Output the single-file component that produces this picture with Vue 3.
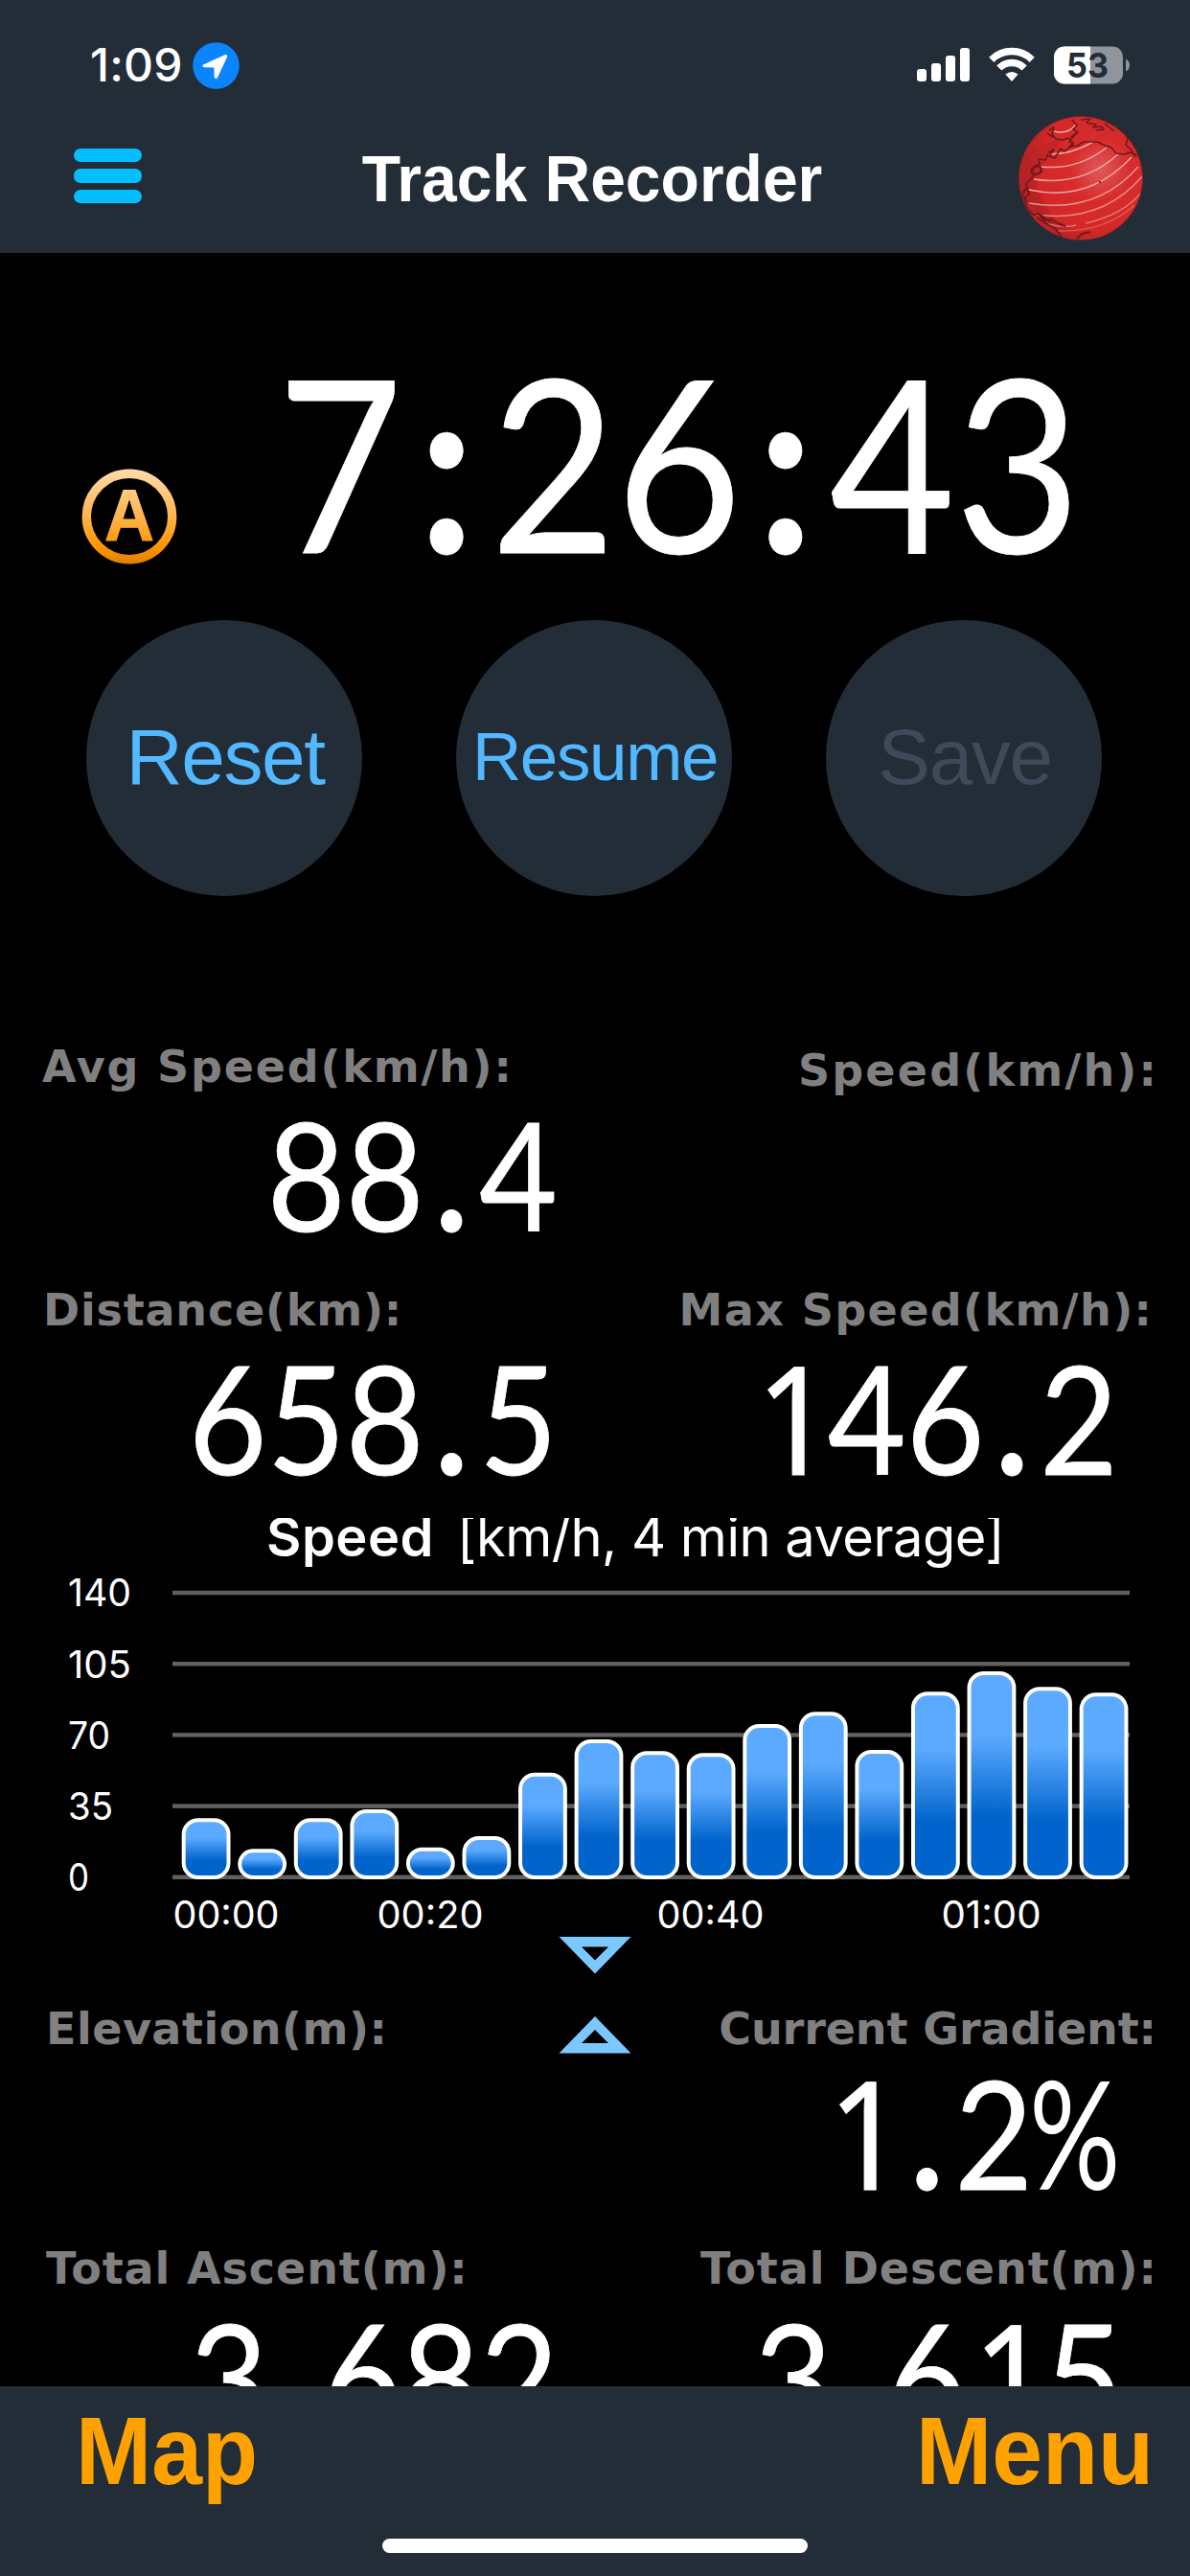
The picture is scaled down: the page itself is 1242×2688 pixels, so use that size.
<script setup>
const bars = [63.7, 31.7, 63.7, 73, 33.3, 45, 111.3, 146, 133.7, 131.7, 162, 174.7, 135, 195.7, 217, 200.7, 194.7]
const yTicks = [140, 105, 70, 35, 0]
const yTickWidth = { 140: 66, 105: 66, 70: 44, 35: 47, 0: 22 }
const xTicks = [
  { label: '00:00', x: 182, w: 108 },
  { label: '00:20', x: 395, w: 108 },
  { label: '00:40', x: 687, w: 109 },
  { label: '01:00', x: 984, w: 101 },
]
const rows = [
  {
    id: 'avg',
    left: { label: 'Avg Speed(km/h):', value: '88.4', track: 1.8 },
    right: { label: 'Speed(km/h):', value: '', track: 2.2 },
  },
  {
    id: 'dist',
    left: { label: 'Distance(km):', value: '658.5', track: 0.8 },
    right: { label: 'Max Speed(km/h):', value: '146.2', track: 1.4 },
  },
]
const lowerRows = [
  {
    id: 'elev',
    left: { label: 'Elevation(m):', value: '', track: 0.5 },
    right: { label: 'Current Gradient:', value: '1.2%', track: -0.1 },
  },
  {
    id: 'total',
    left: { label: 'Total Ascent(m):', value: '3,682', track: 0.9 },
    right: { label: 'Total Descent(m):', value: '3,615', track: 1 },
  },
]
const kind = (c) => (c === '1' ? 'one' : c === '%' ? 'pct' : /\d/.test(c) ? 'digit' : 'punct')
const tracking = (t) => ({ letterSpacing: `${t}px`, marginRight: `${-t}px` })
</script>

<template>
  <div class="screen">
    <header class="top">
      <div class="status">
        <span class="clock">1:09</span>
        <svg class="loc" width="49" height="49" viewBox="0 0 49 49">
          <circle cx="24.5" cy="24.5" r="24.3" fill="#0a84ff" />
          <path d="M11.6 23.2 L33.6 13.3 Q36.8 12.4 36 15.8 L26 37 Q24 39.6 22.6 36.6 L22.4 26.6 L12.2 26.2 Q8.8 25.2 11.6 23.2Z" fill="#fff" />
        </svg>
        <span class="spacer"></span>
        <svg class="signal" width="56" height="36" viewBox="0 0 56 36" fill="#fff">
          <rect x="0" y="22" width="10" height="13" rx="3" />
          <rect x="15" y="16" width="10" height="19" rx="3" />
          <rect x="30" y="8" width="10" height="27" rx="3" />
          <rect x="45" y="0" width="10" height="35" rx="3" />
        </svg>
        <svg class="wifi" width="48" height="37" viewBox="0 0 48 37" fill="none" stroke="#fff" stroke-width="7.4">
          <path d="M2.8 13.3 A30 30 0 0 1 45.2 13.3" />
          <path d="M10.8 22 A18.6 18.6 0 0 1 37.2 22" />
          <path d="M24 36 L17.4 28.6 Q24 23.2 30.6 28.6Z" fill="#fff" stroke="none" />
        </svg>
        <svg class="battery" width="80" height="40" viewBox="0 0 80 40">
          <defs><clipPath id="batt"><rect x="0" y="0.5" width="72" height="39" rx="11" /></clipPath></defs>
          <g clip-path="url(#batt)">
            <rect width="72" height="40" fill="#90949b" />
            <rect width="38" height="40" fill="#fff" />
          </g>
          <path d="M75 13.5 Q79 15.5 79 20 Q79 24.5 75 26.5Z" fill="#90949b" />
          <text x="13" y="33" textLength="44" lengthAdjust="spacingAndGlyphs" class="battText">53</text>
        </svg>
      </div>
      <div class="nav">
        <div class="burger"><i></i><i></i><i></i></div>
        <h1>Track Recorder</h1>
        <svg class="globe" width="132" height="132" viewBox="0 0 132 132">
          <defs>
            <radialGradient id="gl" cx="0.66" cy="0.43" r="0.6">
              <stop offset="0" stop-color="#de5a5a" />
              <stop offset="0.42" stop-color="#d62c2b" />
              <stop offset="0.85" stop-color="#d22827" />
              <stop offset="1" stop-color="#bb2424" />
            </radialGradient>
            <clipPath id="gc"><circle cx="66" cy="66" r="64" /></clipPath>
          </defs>
          <circle cx="66" cy="66" r="64.8" fill="#a41f22" />
          <circle cx="66" cy="66" r="64" fill="url(#gl)" />
          <g clip-path="url(#gc)" fill="none">
            <path d="M5 44 Q22 30 50 24 Q30 44 20 66 Q20 90 52 122 Q14 104 2 76Z" fill="#a91f22" opacity="0.35" />
            <g stroke="#f3a3a3" stroke-width="1.5">
              <path d="M38 17 Q52 21 61 10" />
              <path d="M32 41 Q57 41 79 28" />
              <path d="M25 54 Q62 58 93 34" />
              <path d="M17 67 Q68 75 106 40" />
              <path d="M12 78 Q74 92 119 44" />
              <path d="M12 92 Q82 104 126 54" opacity="0.85" />
              <path d="M20 104 Q88 113 130 64" opacity="0.75" />
              <path d="M32 114 Q50 118 61 115 M71 113 Q110 104 128 82" opacity="0.6" />
              <path d="M42 121 Q92 122 122 94" opacity="0.4" />
            </g>
            <g stroke="#74181c" stroke-width="1.6" stroke-linejoin="round">
              <path d="M57 5 L62 11 L58 15 L63 18 L56 23 L61 20 L54 27 L58 31 L49 38 L45 35 L39 45 L33 43 L38 36 L33 39 L29 47 L22 46 L23 51 L14 56 L17 63 L9 72 L12 83 L3 90 L9 93 L10 101" />
              <path d="M33 16 L38 13 L36 20 L40 25 L48 26 L53 24 L58 29 L54 33 L63 32 L69 28 L84 28 L89 31 L98 34 L103 40 L111 41 L117 39 L127 43" />
              <path d="M66 5 L76 4 L72 8 L82 10 L79 13 L88 12 L90 15 L82 16 M112 20 L115 25 L113 31 L119 37 L123 44 M91 9 L96 13 L101 17 M31 19 L37 23" />
              <path d="M17 55 Q24 50 25 59 Q20 64 14 60Z M10 76 L4 83 L9 89 L5 96" stroke-width="2.2" />
              <path d="M8 95 L16 104 L22 103 L28 110 L35 109 L44 114 L50 116 M20 107 L31 114 L40 119 L47 129 M24 104 L35 112 M62 129 L67 124 L76 122" stroke-width="2" />
            </g>
            <path d="M85 69 l2 1 l-1 1z" stroke="#74181c" />
          </g>
        </svg>
      </div>
    </header>

    <main class="body">
      <section class="timerRow">
        <svg class="auto" width="100" height="100" viewBox="0 0 100 100">
          <defs>
            <linearGradient id="am" gradientUnits="userSpaceOnUse" x1="0" y1="0" x2="0" y2="100">
              <stop offset="0" stop-color="#ffdcae" />
              <stop offset="0.5" stop-color="#ffb44c" />
              <stop offset="0.82" stop-color="#ff9500" />
              <stop offset="1" stop-color="#dc7f00" />
            </linearGradient>
          </defs>
          <circle cx="50" cy="50" r="44.7" fill="none" stroke="url(#am)" stroke-width="9.4" />
          <text x="50" y="75.3" text-anchor="middle" textLength="52" lengthAdjust="spacingAndGlyphs" fill="url(#am)" stroke="url(#am)" stroke-width="1" class="autoA">A</text>
        </svg>
        <div class="num timer"><span v-for="(c, i) in '7:26:43'" :key="i" :class="kind(c)">{{ c }}</span></div>
      </section>

      <section class="actions">
        <button class="act">Reset</button>
        <button class="act small">Resume</button>
        <button class="act off">Save</button>
      </section>

      <section v-for="r in rows" :key="r.id" class="stats" :class="r.id">
        <div class="stat left">
          <div class="label" :style="tracking(r.left.track)">{{ r.left.label }}</div>
          <div class="num"><span v-for="(c, i) in r.left.value" :key="i" :class="kind(c)">{{ c }}</span></div>
        </div>
        <div class="stat right">
          <div class="label" :style="tracking(r.right.track)">{{ r.right.label }}</div>
          <div class="num"><span v-for="(c, i) in r.right.value" :key="i" :class="kind(c)">{{ c }}</span></div>
        </div>
      </section>

      <section class="chart">
        <h2><b>Speed</b><span>[km/h, 4 min average]</span></h2>
        <svg width="1242" height="377" viewBox="0 0 1242 377">
          <defs>
            <linearGradient id="bar" x1="0" y1="0" x2="0" y2="1">
              <stop offset="0.3" stop-color="#5caaff" />
              <stop offset="0.7" stop-color="#0064cc" />
            </linearGradient>
          </defs>
          <g v-for="(t, i) in yTicks" :key="t">
            <rect x="180" :y="15.8 + i * 74.2" width="999" height="4.4" fill="#606060" />
            <text class="tick" x="71" :y="32.3 + i * 74.2" :textLength="yTickWidth[t]" lengthAdjust="spacingAndGlyphs">{{ t }}</text>
          </g>
          <rect
            v-for="(h, i) in bars"
            :key="i"
            :x="191.7 + i * 58.56"
            :y="319 - h"
            width="46.8"
            :height="h - 4"
            :rx="Math.min(15, (h - 4) / 2)"
            fill="url(#bar)"
            stroke="#fff"
            stroke-width="4"
          />
          <text v-for="t in xTicks" :key="t.label" class="tick" :x="t.x - 1.5" y="368" :textLength="t.w + 3" lengthAdjust="spacingAndGlyphs">{{ t.label }}</text>
        </svg>
      </section>

      <div class="lower">
        <svg class="split" width="76" height="122" viewBox="0 0 76 122" fill="#7bc8ff" fill-rule="evenodd">
          <path d="M0.5 0 H75.5 L38 38.4Z M24 10.6 L38 24.4 L52 10.6Z" />
          <path d="M0.5 121.5 H75.5 L38 83.1Z M24 110.9 L38 97.1 L52 110.9Z" />
        </svg>
        <section v-for="r in lowerRows" :key="r.id" class="stats" :class="r.id">
          <div class="stat left">
            <div class="label" :style="tracking(r.left.track)">{{ r.left.label }}</div>
            <div class="num"><span v-for="(c, i) in r.left.value" :key="i" :class="kind(c)">{{ c }}</span></div>
          </div>
          <div class="stat right">
            <div class="label" :style="tracking(r.right.track)">{{ r.right.label }}</div>
            <div class="num"><span v-for="(c, i) in r.right.value" :key="i" :class="kind(c)">{{ c }}</span></div>
          </div>
        </section>
      </div>
    </main>

    <footer class="bottom">
      <div class="links"><a>Map</a><a>Menu</a></div>
      <div class="home"></div>
    </footer>
  </div>
</template>

<style>
body {
  margin: 0;
  background: #000;
}
</style>

<style scoped>
.screen {
  width: 1242px;
  height: 2688px;
  overflow: hidden;
  display: flex;
  flex-direction: column;
  background: #000;
  color: #fff;
  font-family: 'Liberation Sans', Arial, sans-serif;
}
.top {
  height: 264px;
  flex: none;
  background: #222d38;
}
.status {
  height: 116px;
  display: flex;
  align-items: flex-start;
  box-sizing: border-box;
  padding: 44px 62px 0 94px;
}
.clock {
  width: 107px;
  font: 500 48px/48px Inter, sans-serif;
  letter-spacing: 0.3px;
}
.spacer {
  flex: 1;
}
.signal {
  margin: 6px 19px 0 0;
}
.wifi {
  margin: 5px 20px 0 0;
}
.battery {
  margin-top: 4px;
}
.battText {
  font: 700 36px Inter, sans-serif;
  fill: #222d38;
}
.nav {
  height: 148px;
  display: flex;
  align-items: flex-start;
  padding: 0 48px 0 77px;
}
.burger {
  width: 71px;
  display: flex;
  flex-direction: column;
  gap: 7.3px;
  padding-top: 39px;
}
.burger i {
  height: 14.2px;
  border-radius: 7px;
  background: #05beff;
}
h1 {
  flex: 1;
  margin: 0;
  padding-left: 26px;
  text-align: center;
  font-size: 66px;
  line-height: 140px;
  white-space: nowrap;
  transform: scaleY(1.05);
}
.globe {
  margin-top: 4px;
}
.body {
  height: 2226px;
  flex: none;
  overflow: hidden;
}
.timerRow {
  display: flex;
  justify-content: space-between;
  height: 300px;
  padding: 66px 114px 0 85px;
}
.auto {
  margin-top: 159px;
}
.autoA {
  font: 700 76px 'Liberation Sans', sans-serif;
}
.num {
  height: 160px;
  font: 400 157px/160px Lato, 'Noto Sans', sans-serif;
  text-align: right;
  white-space: nowrap;
  transform: scaleX(0.9);
  transform-origin: right center;
  -webkit-text-stroke: 0.8px #fff;
}
.num.timer {
  font-size: 251px;
  line-height: 300px;
  height: 300px;
}
.one,
.punct,
.pct {
  display: inline-block;
  text-align: center;
}
.one {
  width: 0.58em;
  font-family: 'Noto Sans', sans-serif;
  text-indent: 0.05em;
}
.punct {
  width: 0.406em;
  font-weight: 700;
}
.pct {
  width: 0.664em;
  transform: translateX(-13px) scaleX(0.84);
  -webkit-text-stroke: 0;
}
.actions {
  display: flex;
  justify-content: space-between;
  padding: 17px 92px 0 90px;
}
.act {
  width: 288px;
  height: 288px;
  padding: 0 0 2px 2px;
  border: 0;
  border-radius: 50%;
  background: #222d38;
  color: #52b8ff;
  font: 82px/90px 'Liberation Sans', Arial, sans-serif;
  letter-spacing: -1.4px;
}
.act.small {
  font-size: 71px;
  letter-spacing: -1.4px;
}
.act.off {
  color: #3e4a59;
}
.stats {
  display: flex;
  justify-content: space-between;
  height: 217px;
}
.stats.avg {
  padding-top: 152px;
}
.stats.dist {
  padding-top: 36.6px;
  height: 243.4px;
}
.stat.left {
  width: 582px;
}
.stat.left .label {
  padding-left: 44px;
}
.dist .stat.left .label {
  padding-left: 45px;
}
.stat.right {
  width: 600px;
  padding-right: 35px;
  text-align: right;
}
.dist .stat.right {
  padding-right: 40px;
}
.stat.right .num {
  margin-right: 39px;
}
.dist .stat.right .num {
  margin-right: 35px;
}
.avg .stat.right {
  padding-top: 4px;
}
.label {
  height: 57px;
  font: 700 46px/53px 'DejaVu Sans', Verdana, sans-serif;
  color: #808080;
  white-space: nowrap;
}
.chart h2 {
  height: 60px;
  margin: 0;
  padding-left: 278px;
  overflow: hidden;
  display: flex;
  gap: 24px;
  font: 400 56px/40px Inter, sans-serif;
  white-space: nowrap;
}
.chart h2 b {
  font-weight: 600;
  letter-spacing: 0.5px;
}
.chart h2 span {
  letter-spacing: -0.5px;
}
.chart svg {
  display: block;
}
.tick {
  font: 400 39px Inter, sans-serif;
  fill: #fff;
}
.lower {
  position: relative;
  padding-top: 69.6px;
}
.split {
  position: absolute;
  left: 583px;
  top: 0;
}
.elev .label {
  height: 53px;
}
.stats.elev {
  height: 250px;
}
.lower .stat.left {
  width: 583px;
}
.lower .stat.left .label {
  padding-left: 48px;
}
.lower .stat.right .num {
  margin-right: 35px;
}
.bottom {
  height: 198px;
  flex: none;
  background: #222d38;
}
.links {
  display: flex;
  justify-content: space-between;
  height: 159px;
  padding: 0 38px 0 79px;
  color: #ffa200;
  font-weight: 700;
  font-size: 100px;
  line-height: 134px;
}
.links a {
  transform: scaleX(0.95);
  transform-origin: left center;
}
.links a:last-child {
  transform-origin: right center;
}
.home {
  width: 444px;
  height: 15px;
  margin: 0 auto;
  border-radius: 8px;
  background: #fff;
}
</style>
